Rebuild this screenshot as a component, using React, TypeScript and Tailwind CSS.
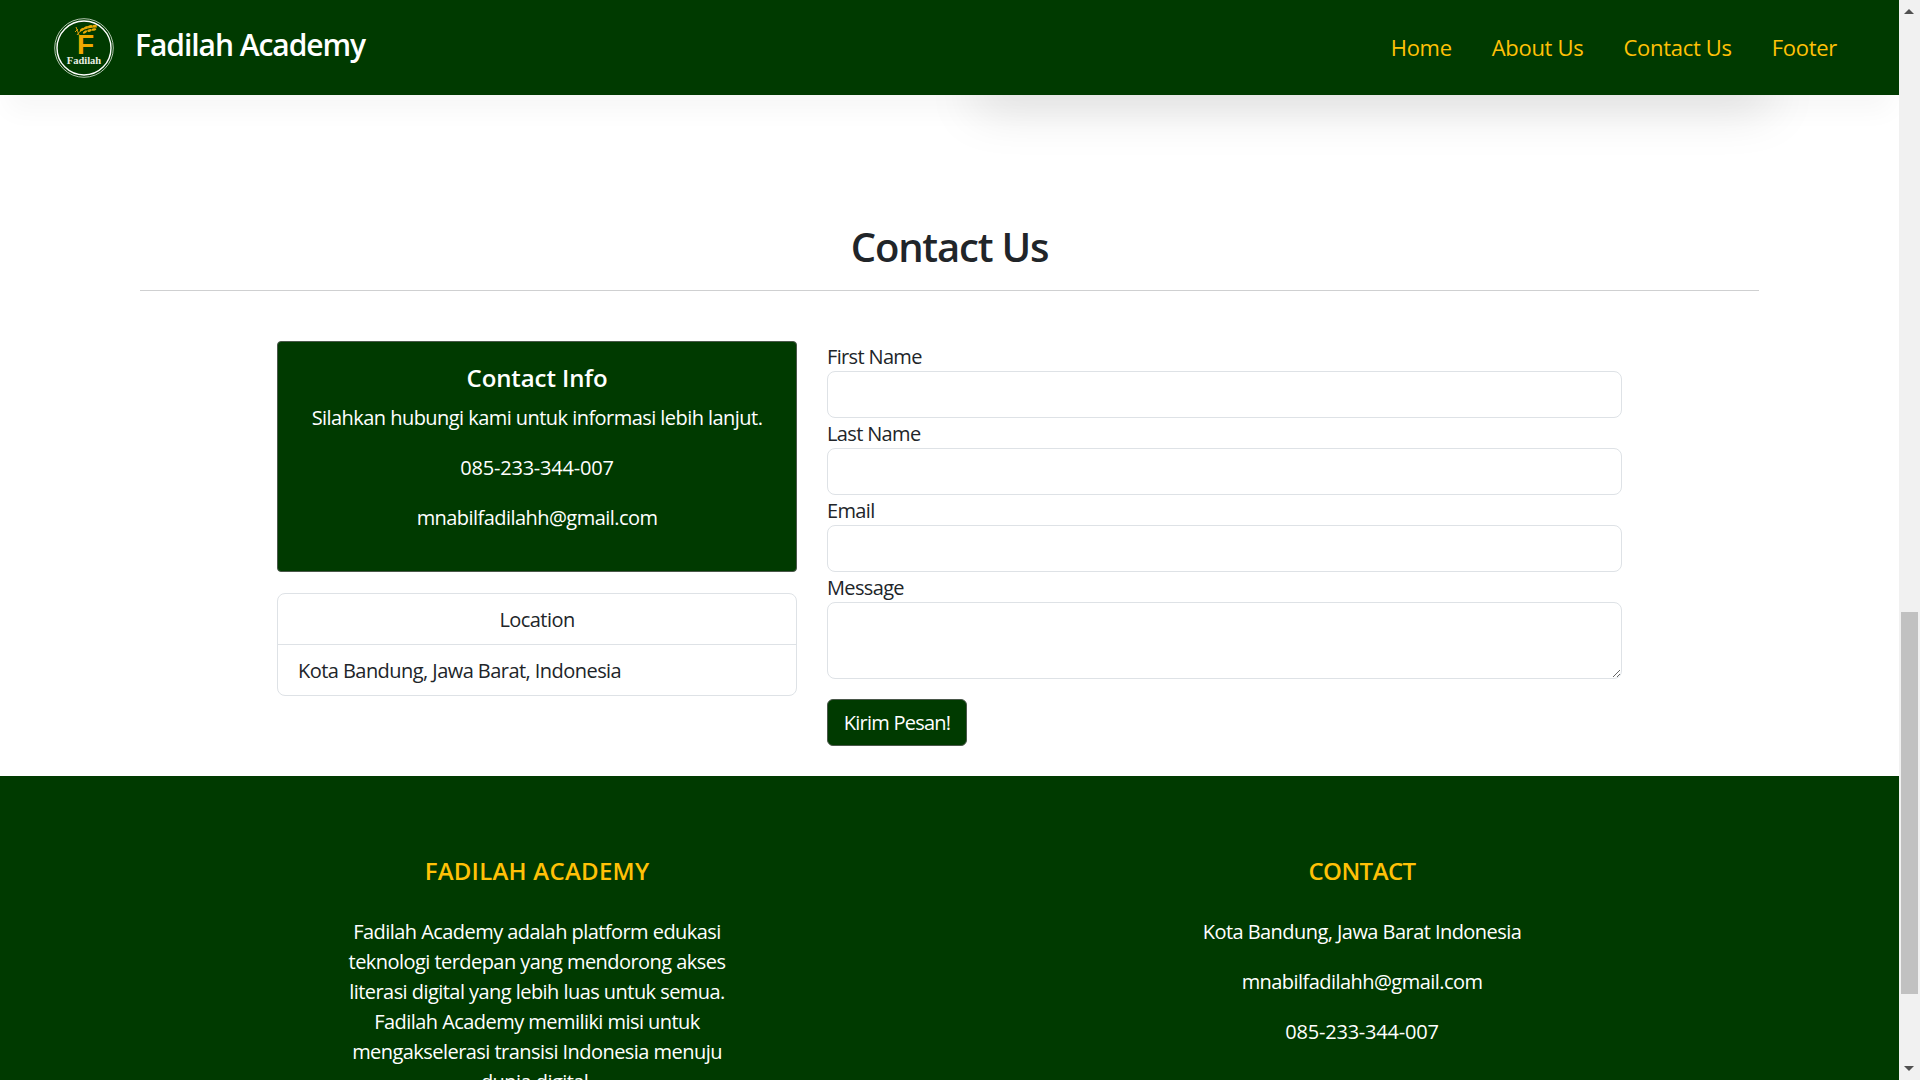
const navLinks = ['Home', 'About Us', 'Contact Us', 'Footer'];

function Logo() {
  return (
    <svg width="60" height="60" viewBox="0 0 60 60" className="shrink-0">
      <circle cx="30" cy="30" r="29.3" fill="none" stroke="#c9d6c6" strokeWidth="0.9" />
      <circle cx="30" cy="30" r="27" fill="none" stroke="#ffffff" strokeWidth="1.4" />
      {/* wheat ear over the F */}
      <path d="M23 17c3-5 10-8 20-8" fill="none" stroke="#e0a106" strokeWidth="1" />
      <path d="M22 9l3 8M24 11l-3 3" fill="none" stroke="#e0a106" strokeWidth="1" />
      <g fill="#e8a905">
        <ellipse cx="28" cy="11.5" rx="2.4" ry="1.2" transform="rotate(-35 28 11.5)" />
        <ellipse cx="32" cy="9.5" rx="2.4" ry="1.2" transform="rotate(-25 32 9.5)" />
        <ellipse cx="36" cy="8.5" rx="2.4" ry="1.2" transform="rotate(-15 36 8.5)" />
        <ellipse cx="40.5" cy="8" rx="2.4" ry="1.2" transform="rotate(-5 40.5 8)" />
        <ellipse cx="31" cy="14" rx="2.4" ry="1.2" transform="rotate(-30 31 14)" />
        <ellipse cx="35.5" cy="12.5" rx="2.4" ry="1.2" transform="rotate(-15 35.5 12.5)" />
        <ellipse cx="40" cy="11.5" rx="2.4" ry="1.2" transform="rotate(-10 40 11.5)" />
      </g>
      <text x="31.5" y="36" textAnchor="middle" fontFamily="'Liberation Sans', sans-serif" fontWeight="700" fontSize="28" fill="#f0aa00">
        F
      </text>
      <text x="30" y="46" textAnchor="middle" fontFamily="'Liberation Serif', serif" fontWeight="700" fontSize="10.5" fill="#e8eee4">
        Fadilah
      </text>
    </svg>
  );
}

function Field({ label }: { label: string }) {
  return (
    <label className="block">
      <span className="block h-[30px] text-[20px] leading-[32px] tracking-[-0.65px] text-[#212529]">{label}</span>
      <input className="block h-[47px] w-full rounded-[8px] border border-[#dee2e6] bg-white" />
    </label>
  );
}

export default function App() {
  return (
    <div className="flex h-screen overflow-hidden bg-white font-['Open_Sans',sans-serif] text-[#212529]">
      <div className="relative min-w-0 flex-1 overflow-hidden">
        {/* shadow of a card scrolled away behind the navbar */}
        <div className="absolute left-[975px] top-[62px] h-[30px] w-[795px] shadow-[0_16px_50px_rgba(0,0,0,0.15)]"></div>
        <nav className="relative z-10 flex h-[95px] items-center justify-between bg-[#003a00] pl-[54px] pr-[62px] shadow-[0_24px_24px_-8px_rgba(0,0,0,0.035)]">
          <div className="flex items-center gap-[21px]">
            <Logo />
            <span className="mb-[7px] text-[30px] font-semibold tracking-[-1.05px] text-white">Fadilah Academy</span>
          </div>
          <ul className="flex gap-[40px]">
            {navLinks.map((link) => (
              <li key={link} className="text-[22px] tracking-[-0.3px] text-[#ffc107]">
                {link}
              </li>
            ))}
          </ul>
        </nav>

        <section className="px-[140px] pt-[128px]">
          <h1 className="text-center text-[40px] leading-[48px] font-semibold tracking-[-1.2px]">Contact Us</h1>
          <hr className="mt-[19px] border-[#cfd0d1]" />
        </section>

        <section className="mt-[50px] flex gap-[30px] pl-[277px]">
          <div className="w-[520px]">
            <div className="h-[231px] rounded-[4px] border border-[#4a574a] bg-[#003a00] pt-[18px] text-center text-[20px] text-white">
              <h2 className="text-[24px] leading-[36px] font-semibold tracking-[-0.1px]">Contact Info</h2>
              <p className="mt-[7px] leading-[30px] tracking-[-0.55px]">Silahkan hubungi kami untuk informasi lebih lanjut.</p>
              <p className="mt-[20px] leading-[30px] tracking-[-0.2px]">085-233-344-007</p>
              <p className="mt-[20px] leading-[30px] tracking-[-0.55px]">mnabilfadilahh@gmail.com</p>
            </div>
            <div className="mt-[21px] rounded-[8px] border border-[#dee2e6] text-[20px] tracking-[-0.55px]">
              <div className="h-[51px] border-b border-[#dee2e6] text-center leading-[52px]">Location</div>
              <div className="h-[50px] pl-[20px] leading-[52px]">Kota Bandung, Jawa Barat, Indonesia</div>
            </div>
          </div>

          <form className="w-[795px]">
            <Field label="First Name" />
            <Field label="Last Name" />
            <Field label="Email" />
            <label className="block">
              <span className="block h-[30px] text-[20px] leading-[32px] tracking-[-0.65px]">Message</span>
              <textarea className="block h-[77px] w-full rounded-[8px] border border-[#dee2e6]" />
            </label>
            <button type="button" className="mt-[20px] h-[47px] w-[140px] rounded-[6px] border border-[#4a574a] bg-[#003a00] text-[20px] tracking-[-0.75px] text-white">
              Kirim Pesan!
            </button>
          </form>
        </section>

        <footer className="mt-[30px] flex h-[400px] bg-[#003a00] pt-[77px] text-center text-[20px] leading-[30px] tracking-[-0.55px] text-white">
          <div className="ml-[337px] w-[400px]">
            <h3 className="text-[24px] leading-[36px] font-semibold tracking-[0.25px] text-[#ffc107]">FADILAH ACADEMY</h3>
            <p className="mt-[28px]">
              Fadilah Academy adalah platform edukasi teknologi terdepan yang mendorong akses literasi digital yang lebih luas untuk semua. Fadilah Academy memiliki misi untuk mengakselerasi transisi Indonesia menuju dunia digital.
            </p>
          </div>
          <div className="ml-[425px] w-[400px]">
            <h3 className="text-[24px] leading-[36px] font-semibold text-[#ffc107]">CONTACT</h3>
            <p className="mt-[28px]">Kota Bandung, Jawa Barat Indonesia</p>
            <p className="mt-[20px]">mnabilfadilahh@gmail.com</p>
            <p className="mt-[20px] tracking-[-0.2px]">085-233-344-007</p>
          </div>
        </footer>
      </div>

      {/* fake browser scrollbar, the page is photographed scrolled down */}
      <div className="relative w-[21px] shrink-0 bg-[#f1f1f1]">
        <div className="absolute left-[5px] top-[9px] h-0 w-0 border-x-[5px] border-b-[5px] border-x-transparent border-b-[#505050]"></div>
        <div className="absolute left-[2px] top-[612px] h-[382px] w-[17px] bg-[#c1c1c1]"></div>
        <div className="absolute bottom-[9px] left-[5px] h-0 w-0 border-x-[5px] border-t-[5px] border-x-transparent border-t-[#505050]"></div>
      </div>
    </div>
  );
}
